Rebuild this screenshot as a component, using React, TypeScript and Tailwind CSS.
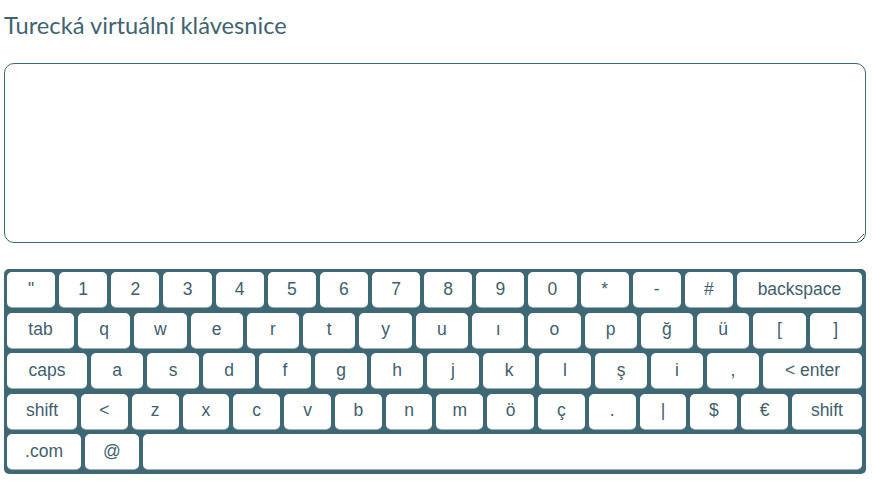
import React from 'react';

type K = { label: string; w?: string };

const ROWS: { keys: K[] }[] = [
  {
    keys: [
      ...['"', '1', '2', '3', '4', '5', '6', '7', '8', '9', '0', '*', '-', '#'].map((l) => ({ label: l })),
      { label: 'backspace', w: 'w-[125px]' },
    ],
  },
  {
    keys: [
      { label: 'tab', w: 'w-[67px]' },
      ...['q', 'w', 'e', 'r', 't', 'y', 'u', 'ı', 'o', 'p', 'ğ', 'ü', '[', ']'].map((l) => ({ label: l })),
    ],
  },
  {
    keys: [
      { label: 'caps', w: 'w-[80px]' },
      ...['a', 's', 'd', 'f', 'g', 'h', 'j', 'k', 'l', 'ş', 'i', ','].map((l) => ({ label: l })),
      { label: '< enter', w: 'w-[99px]' },
    ],
  },
  {
    keys: [
      { label: 'shift', w: 'w-[70px]' },
      ...['<', 'z', 'x', 'c', 'v', 'b', 'n', 'm', 'ö', 'ç', '.', '|', '$', '€'].map((l) => ({ label: l })),
      { label: 'shift', w: 'w-[70px]' },
    ],
  },
];

function Key({ label, w }: K) {
  return (
    <button
      className={`${w ?? 'flex-1'} h-[35px] shrink-0 min-w-0 bg-white rounded-[5px] shadow-[0_1px_0_#9fb0b5] text-[17.5px] text-[#40606c] leading-none flex items-center justify-center`}
      style={{ fontFamily: '"Liberation Sans", Arial, sans-serif' }}
    >
      {label}
    </button>
  );
}

export default function App() {
  return (
    <div className="w-[872px] h-[502px] bg-white pl-[4px] pr-[6px] pt-[11px]">
      <h1
        className="text-[23.7px] leading-[29px] text-[#3f6471]"
        style={{ fontFamily: 'Lato, "Open Sans", sans-serif' }}
      >
        Turecká virtuální klávesnice
      </h1>

      <textarea className="block mt-[23px] w-[862px] h-[180px] border border-[#3e6874] rounded-[10px] outline-none p-2" />

      {/* keyboard */}
      <div className="mt-[26px] w-[862px] bg-[#3e6874] rounded-[5px] pl-[3px] pr-[4px] pt-[3px] pb-[5px] flex flex-col gap-[5.5px]">
        {ROWS.map((row, i) => (
          <div key={i} className="flex gap-[4px]">
            {row.keys.map((k, j) => (
              <Key key={j} {...k} />
            ))}
          </div>
        ))}
        <div className="flex gap-[4px]">
          <Key label=".com" w="w-[74px]" />
          <Key label="@" w="w-[54px]" />
          <Key label="" />
        </div>
      </div>
    </div>
  );
}
